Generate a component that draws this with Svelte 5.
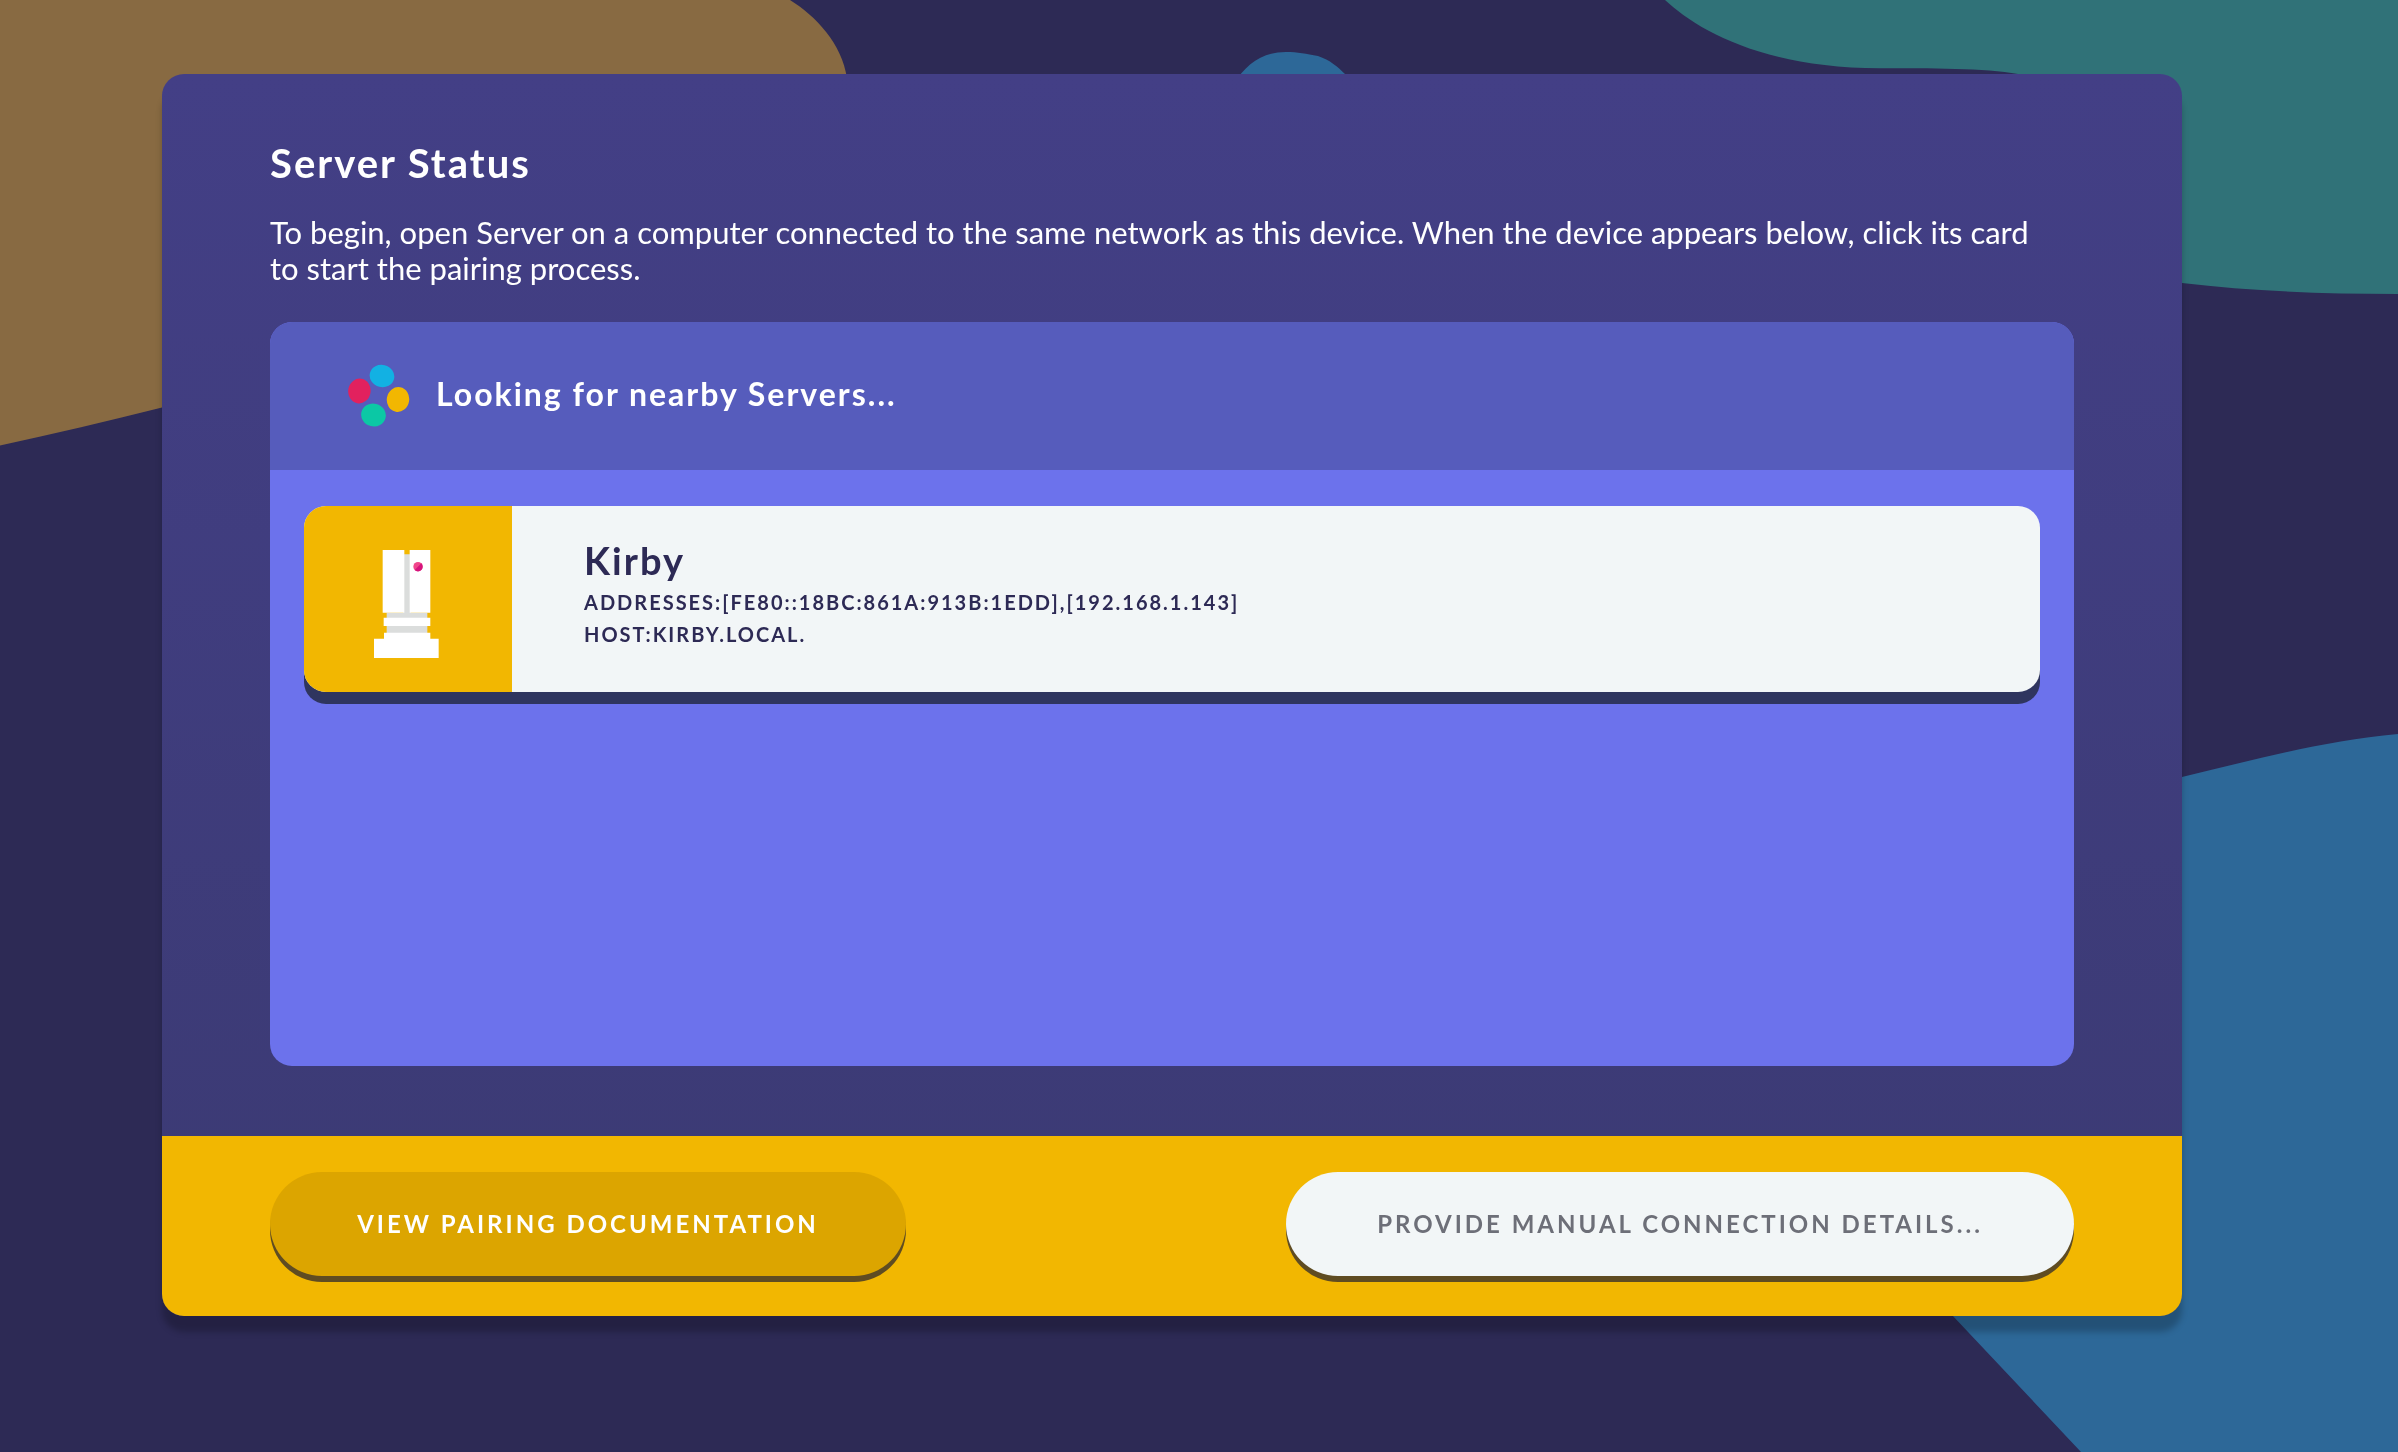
<script>
  const servers = [
    {
      name: 'Kirby',
      addresses: '[fe80::18bc:861a:913b:1edd],[192.168.1.143]',
      host: 'Kirby.local.'
    }
  ];
</script>

<svg class="backdrop" viewBox="0 0 2398 1452" preserveAspectRatio="xMidYMid slice" aria-hidden="true">
  <path fill="#886a42" d="M790 0C816 16 842 44 847 78C850 200 700 290 500 325C380 350 270 382 162 407.500C108 421 54 434 0 445.500V0Z" />
  <path fill="#2d6898" d="M1234 84C1246 64 1262 52 1286 52C1298 52 1306 54 1318 56C1330 60 1338 67 1345 74L1356 90Z" />
  <path fill="#307278" d="M1665 0C1695 28 1760 68 1880 68.300C1930 68.500 1985 68 2018 74C2090 130 2100 265 2182 283C2250 291 2320 294 2398 294V0Z" />
  <path fill="#2d6898" d="M2398 734C2320 741 2250 761 2182 777C2000 830 1850 1100 1870 1220C1880 1250 1915 1277 1952 1315L2081 1452H2398Z" />
</svg>

<main class="page">
  <section class="dialog" aria-labelledby="title">
    <div class="content">
      <h1 id="title">Server Status</h1>
      <p class="intro">
        To begin, open Server on a computer connected to the same network as this device. When the device appears
        below, click its card to start the pairing process.
      </p>

      <div class="panel">
        <div class="searching" role="status">
          <svg class="spinner" viewBox="0 0 62 64" aria-hidden="true">
            <ellipse cx="34" cy="12" rx="12.400" ry="11.200" fill="#12b1e3" transform="rotate(14 34 12)" />
            <ellipse cx="11.400" cy="27" rx="11.200" ry="12.400" fill="#e2215e" transform="rotate(10 11.400 27)" />
            <ellipse cx="50" cy="35.500" rx="11.200" ry="12.500" fill="#f2b701" transform="rotate(10 50 35.500)" />
            <ellipse cx="25.500" cy="51" rx="12.400" ry="11.400" fill="#0bc8a5" transform="rotate(14 25.500 51)" />
          </svg>
          <h2>Looking for nearby Servers...</h2>
        </div>

        <ul class="servers">
          {#each servers as server}
            <li>
              <button class="server" type="button">
                <span class="tile">
                  <svg viewBox="0 0 204 354" aria-hidden="true">
                    <path fill="#dbdddc" d="M88 43h22v175h50v66H38v-66h50z" />
                    <path fill="#fff" d="M26 30h65v188H26zM107 30h62v188h-62zM29 233h140v25H29zM30 278h139v18h25v58H0v-58h30z" />
                    <circle cx="132" cy="80" r="14" fill="#f0478b" />
                    <path fill="#d6147c" d="M142 70a14 14 0 0 1-20 20z" />
                  </svg>
                </span>
                <span class="details">
                  <span class="name">{server.name}</span>
                  <span class="meta">Addresses:{server.addresses}</span>
                  <span class="meta">Host:{server.host}</span>
                </span>
              </button>
            </li>
          {/each}
        </ul>
      </div>
    </div>

    <footer>
      <button class="action docs" type="button">View pairing documentation</button>
      <button class="action manual" type="button">Provide manual connection details...</button>
    </footer>
  </section>
</main>

<style>
  :global(body) {
    margin: 0;
    background: #2d2a55;
    font-family: Lato, 'Open Sans', sans-serif;
  }

  .backdrop {
    position: fixed;
    inset: 0;
    width: 100%;
    height: 100%;
    z-index: -1;
  }

  .page {
    padding: 74px 216px 136px 162px;
  }

  .dialog {
    border-radius: 22px;
    overflow: hidden;
    background: linear-gradient(#433f86, #3b3a73);
    box-shadow: 0 16px 6px rgba(0, 0, 0, 0.22);
  }

  .content {
    padding: 66px 108px 70px;
  }

  h1,
  h2,
  p,
  ul {
    margin: 0;
    padding: 0;
  }

  h1 {
    color: #fff;
    font-size: 40px;
    line-height: 46px;
    font-weight: 700;
    letter-spacing: 2px;
  }

  .intro {
    margin: 28px 0 36px;
    padding-right: 24px;
    color: #fff;
    font-size: 31px;
    line-height: 36px;
  }

  .panel {
    min-height: 744px;
    border-radius: 22px;
    overflow: hidden;
    background: #6c72ec;
  }

  .searching {
    display: flex;
    align-items: center;
    gap: 26px;
    min-height: 148px;
    padding: 0 78px;
    background: #565cbc;
  }

  .spinner {
    flex: none;
    width: 62px;
    height: 64px;
  }

  h2 {
    padding-bottom: 4px;
    color: #fff;
    font-size: 32px;
    line-height: 36px;
    font-weight: 700;
    letter-spacing: 2px;
  }

  .servers {
    display: grid;
    gap: 36px;
    padding: 36px 34px;
    list-style: none;
  }

  button {
    border: 0;
    font-family: inherit;
    cursor: pointer;
  }

  .server {
    display: flex;
    width: 100%;
    min-height: 186px;
    padding: 0;
    border-radius: 22px;
    overflow: hidden;
    background: #f2f6f7;
    box-shadow: 0 12px 0 #2f355f;
    color: #2d2a55;
    text-align: left;
  }

  .tile {
    display: flex;
    flex: none;
    align-items: center;
    justify-content: center;
    align-self: stretch;
    width: 208px;
    background: #f2b701;
  }

  .tile svg {
    width: 68px;
    height: 118px;
  }

  .details {
    display: flex;
    flex-direction: column;
    padding: 30px 72px;
  }

  .name {
    margin-bottom: 2px;
    font-size: 38px;
    line-height: 48px;
    font-weight: 700;
    letter-spacing: 2px;
  }

  .meta {
    font-size: 20px;
    line-height: 32px;
    font-weight: 700;
    letter-spacing: 2px;
    text-transform: uppercase;
  }

  footer {
    display: flex;
    justify-content: space-between;
    padding: 36px 108px 40px;
    background: #f2b701;
  }

  .action {
    height: 104px;
    padding: 0 86px;
    border-radius: 52px;
    box-shadow: 0 6px 0 #5f4c22;
    font-size: 24px;
    line-height: 30px;
    font-weight: 700;
    letter-spacing: 3px;
    text-transform: uppercase;
  }

  .docs {
    min-width: 636px;
    background: #dca500;
    color: #fff;
  }

  .manual {
    min-width: 788px;
    background: #f2f6f7;
    color: #6d6f78;
  }
</style>
